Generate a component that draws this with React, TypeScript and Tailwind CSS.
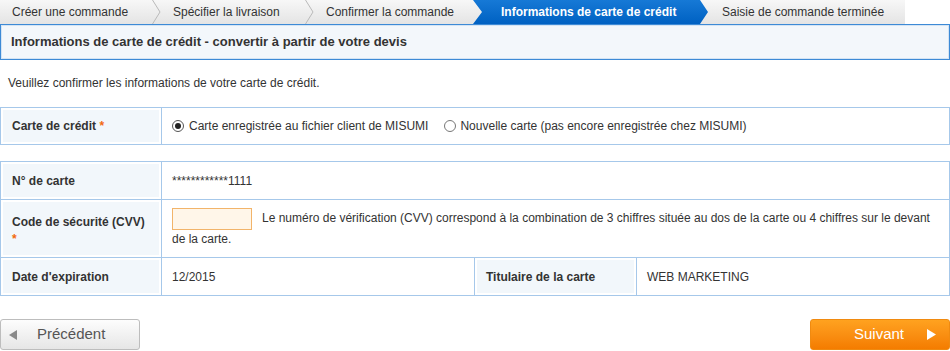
import React from "react";

const font = { fontFamily: '"Liberation Sans", Arial, sans-serif' };

function Chevron() {
  return (
    <svg width="9" height="24" viewBox="0 0 9 24" className="shrink-0">
      <polyline points="0.5,0 8,12 0.5,24" fill="none" stroke="#b9b9b9" strokeWidth="1" />
    </svg>
  );
}

function Req() {
  return <span className="text-[#f26a10] font-bold">*</span>;
}

function Label({ children, w = "w-[160px]" }: { children: React.ReactNode; w?: string }) {
  return (
    <div className={`${w} shrink-0 p-[2px] bg-white flex`}>
      <div className="flex-1 bg-[#f2f7fb] pl-[9px] pr-2 flex items-center font-bold text-[12px] text-[#333]">
        {children}
      </div>
    </div>
  );
}

export default function App() {
  return (
    <div className="w-[950px] h-[351px] bg-white text-[#333] text-[12px]" style={font}>
      {/* Step bar */}
      <div className="flex h-[24px] w-[905px] bg-gradient-to-b from-[#f7f7f7] to-[#e4e4e4] text-[12px] text-[#333]">
        <div className="w-[152px] pl-[12px] flex items-center">Créer une commande</div>
        <Chevron />
        <div className="w-[144px] pl-[12px] flex items-center">Spécifier la livraison</div>
        <Chevron />
        <div className="w-[159px] pl-[12px] flex items-center">Confirmer la commande</div>
        <div className="w-[235px] pl-[28px] flex items-center font-bold text-white bg-gradient-to-b from-[#1679d6] to-[#0061c2] [clip-path:polygon(0_0,227px_0,235px_50%,227px_100%,0_100%,9px_50%)]">
          Informations de carte de crédit
        </div>
        <div className="w-[197px] pl-[14px] flex items-center">Saisie de commande terminée</div>
      </div>

      {/* Header */}
      <div className="h-[36px] border border-[#3d8ad6] bg-[#f3f7fb] shadow-[inset_0_0_0_1px_#d4e4f4] flex items-center pl-[10px] font-bold text-[13px] text-[#333]">
        Informations de carte de crédit - convertir à partir de votre devis
      </div>

      <div className="pl-[8px] pt-[14px] h-[47px] text-[12px]">Veuillez confirmer les informations de votre carte de crédit.</div>

      {/* Table 1 */}
      <div className="border border-[#a6c8ea] flex h-[38px]">
        <Label>
          <span>
            Carte de crédit <Req />
          </span>
        </Label>
        <div className="flex-1 border-l border-[#a6c8ea] flex items-center pl-[10px]">
          <span className="w-[12px] h-[12px] rounded-full border border-[#555] bg-white flex items-center justify-center mr-[5px]">
            <span className="w-[6px] h-[6px] rounded-full bg-[#222]" />
          </span>
          <span>Carte enregistrée au fichier client de MISUMI</span>
          <span className="w-[12px] h-[12px] rounded-full border border-[#777] bg-white ml-[16px] mr-[4px]" />
          <span>Nouvelle carte (pas encore enregistrée chez MISUMI)</span>
        </div>
      </div>

      {/* Table 2 */}
      <div className="mt-[16px] border border-[#a6c8ea]">
        <div className="flex h-[37px]">
          <Label>N° de carte</Label>
          <div className="flex-1 border-l border-[#a6c8ea] flex items-center pl-[10px]">************1111</div>
        </div>
        <div className="flex h-[58px] border-t border-[#a6c8ea]">
          <div className="w-[160px] shrink-0 p-[2px] bg-white flex">
            <div className="flex-1 bg-[#f2f7fb] pl-[9px] pt-[12px] font-bold leading-[17px]">
              Code de sécurité (CVV)
              <br />
              <Req />
            </div>
          </div>
          <div className="flex-1 border-l border-[#a6c8ea] pl-[10px] pr-[10px] pt-[8px] leading-[19px]">
            <input
              className="align-middle w-[80px] h-[22px] border border-[#f2b46a] bg-[#fff6e9] mr-[10px] outline-none"
              aria-label="CVV"
            />
            Le numéro de vérification (CVV) correspond à la combination de 3 chiffres située au dos de la carte ou 4 chiffres sur le devant de la carte.
          </div>
        </div>
        <div className="flex h-[38px] border-t border-[#a6c8ea]">
          <Label>Date d'expiration</Label>
          <div className="w-[313px] border-l border-[#a6c8ea] flex items-center pl-[10px]">12/2015</div>
          <div className="border-l border-[#a6c8ea] flex">
            <Label w="w-[161px]">Titulaire de la carte</Label>
          </div>
          <div className="flex-1 border-l border-[#a6c8ea] flex items-center pl-[10px]">WEB MARKETING</div>
        </div>
      </div>

      {/* Buttons */}
      <div className="flex justify-between mt-[23px]">
        <button className="w-[140px] h-[31px] rounded-[3px] border border-[#bdbdbd] bg-gradient-to-b from-[#fdfdfd] to-[#e6e6e6] flex items-center text-[15px] text-[#555]">
          <svg width="8" height="10" viewBox="0 0 8 10" className="ml-[8px] mr-[20px]">
            <polygon points="8,0 8,10 0,5" fill="#8a8a8a" />
          </svg>
          Précédent
        </button>
        <button className="w-[140px] h-[31px] rounded-[3px] border border-[#f08a10] bg-gradient-to-b from-[#ffa21f] to-[#f47c00] flex items-center text-[15px] text-white">
          <span className="ml-[43px]">Suivant</span>
          <svg width="9" height="11" viewBox="0 0 9 11" className="ml-[23px]">
            <polygon points="0,0 9,5.5 0,11" fill="#fff" />
          </svg>
        </button>
      </div>
    </div>
  );
}
